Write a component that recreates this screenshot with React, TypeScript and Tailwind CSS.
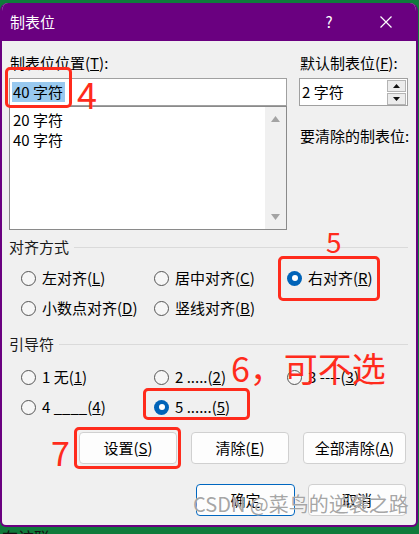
import React from 'react';

const font = "font-['Noto_Sans_CJK_SC','Noto_Sans',sans-serif]";

function Radio({ checked, children }: { checked?: boolean; children: React.ReactNode }) {
  return (
    <div className="flex h-[30px] items-center">
      {checked ? (
        <span className="flex h-[15px] w-[15px] items-center justify-center rounded-full bg-[#0063b8]">
          <span className="h-[6px] w-[6px] rounded-full bg-white" />
        </span>
      ) : (
        <span className="h-[15px] w-[15px] rounded-full border border-[#555] bg-[#f6f6f6]" />
      )}
      <span className="ml-[6px] whitespace-nowrap text-[15px] leading-[20px] text-black">{children}</span>
    </div>
  );
}

function GroupLabel({ text }: { text: string }) {
  return (
    <div className="flex h-[20px] items-center">
      <span className="text-[15px] leading-[20px] text-[#1a1a1a]">{text}</span>
      <span className="ml-[5px] h-px flex-1 bg-[#dadada]" />
    </div>
  );
}

function Btn({ w, primary, children }: { w: string; primary?: boolean; children: React.ReactNode }) {
  return (
    <div
      className={`flex h-[32px] ${w} items-center justify-center rounded-[4px] border bg-[#fdfdfd] text-[15px] text-black ${
        primary ? 'border-[#0067c0]' : 'border-[#d0d0d0]'
      }`}
    >
      {children}
    </div>
  );
}

export default function App() {
  return (
    <div className={`relative h-[534px] w-[419px] overflow-hidden bg-[#0f7b3b] pt-[3px] ${font}`}>
      <div className="flex h-[524px] w-[418px] flex-col overflow-hidden rounded-t-[8px] rounded-b-[6px] border-x-2 border-b-2 border-[#6a0080] bg-[#f0f0f0]">
        {/* title bar */}
        <div className="flex h-[38px] shrink-0 items-center bg-[#6a0080] pl-[8px] pr-[24px] text-white">
          <span className="text-[15px] leading-[20px]">制表位</span>
          <span className="ml-auto w-[16px] text-center text-[15px] leading-[20px]">?</span>
          <svg className="ml-[43px]" width="12" height="12" viewBox="0 0 12 12">
            <path d="M0.5 0.5 L11.5 11.5 M11.5 0.5 L0.5 11.5" stroke="white" strokeWidth="1.2" />
          </svg>
        </div>

        <div className="flex flex-col pl-[7px] pr-[8px]">
          {/* top area */}
          <div className="flex gap-[12px]">
            <div className="flex w-[278px] flex-col">
              <div className="mt-[12px] h-[20px] pl-px text-[15px] leading-[20px] text-black">
                制表位位置(<u>T</u>):
              </div>
              <div className="mt-[5px] flex h-[28px] items-center border border-[#a0a0a0] bg-white pl-[2px]">
                <span className="bg-[#99c9ef] pl-px pr-[2px] text-[15px] leading-[20px] text-black">40 字符</span>
              </div>
              <div className="flex h-[124px] border border-[#8a8a8a] bg-white">
                <div className="flex flex-1 flex-col pl-[3px] pt-[3px] text-[15px] leading-[20px] text-black">
                  <span>20 字符</span>
                  <span>40 字符</span>
                </div>
                <div className="flex w-[21px] flex-col items-center justify-between bg-[#f0f0f0] py-[9px]">
                  <svg width="9" height="6" viewBox="0 0 9 6">
                    <path d="M4.5 0 L9 6 L0 6 Z" fill="#a3a3a3" />
                  </svg>
                  <svg width="9" height="6" viewBox="0 0 9 6">
                    <path d="M0 0 L9 0 L4.5 6 Z" fill="#a3a3a3" />
                  </svg>
                </div>
              </div>
            </div>

            <div className="flex w-[109px] flex-col">
              <div className="mt-[12px] h-[20px] whitespace-nowrap pl-px text-[15px] leading-[20px] text-black">
                默认制表位(<u>F</u>):
              </div>
              <div className="mt-[5px] flex h-[28px] items-center border border-[#a0a0a0] bg-white pl-[2px] pr-px">
                <span className="flex-1 text-[15px] leading-[20px] text-black">2 字符</span>
                <div className="flex flex-col gap-px">
                  <div className="flex h-[12px] w-[19px] items-center justify-center border border-[#b4b4b4] bg-[#ececec]">
                    <svg width="7" height="4" viewBox="0 0 7 4">
                      <path d="M3.5 0 L7 4 L0 4 Z" fill="#111" />
                    </svg>
                  </div>
                  <div className="flex h-[12px] w-[19px] items-center justify-center border border-[#b4b4b4] bg-[#ececec]">
                    <svg width="7" height="4" viewBox="0 0 7 4">
                      <path d="M0 0 L7 0 L3.5 4 Z" fill="#111" />
                    </svg>
                  </div>
                </div>
              </div>
              <div className="mt-[20px] whitespace-nowrap pl-px text-[15px] leading-[20px] text-black">
                要清除的制表位:
              </div>
            </div>
          </div>

          {/* alignment */}
          <div className="mt-[7px]">
            <GroupLabel text="对齐方式" />
          </div>
          <div className="mt-[6px] grid grid-cols-[133px_133px_1fr] pl-[12px]">
            <Radio>
              左对齐(<u>L</u>)
            </Radio>
            <Radio>
              居中对齐(<u>C</u>)
            </Radio>
            <Radio checked>
              右对齐(<u>R</u>)
            </Radio>
            <Radio>
              小数点对齐(<u>D</u>)
            </Radio>
            <Radio>
              竖线对齐(<u>B</u>)
            </Radio>
          </div>

          {/* leader */}
          <div className="mt-[11px]">
            <GroupLabel text="引导符" />
          </div>
          <div className="mt-[8px] grid grid-cols-[133px_133px_1fr] pl-[12px]">
            <Radio>
              1 无(<u>1</u>)
            </Radio>
            <Radio>
              2 .....(<u>2</u>)
            </Radio>
            <Radio>
              3 ----(<u>3</u>)
            </Radio>
            <Radio>
              4 ____(<u>4</u>)
            </Radio>
            <Radio checked>
              5 ......(<u>5</u>)
            </Radio>
          </div>

          {/* buttons */}
          <div className="mr-[2px] mt-[10px] flex justify-end gap-[14px]">
            <Btn w="w-[98px]">
              设置(<u>S</u>)
            </Btn>
            <Btn w="w-[98px]">
              清除(<u>E</u>)
            </Btn>
            <Btn w="w-[103px]">
              全部清除(<u>A</u>)
            </Btn>
          </div>
          <div className="mr-[2px] mt-[20px] flex justify-end gap-[13px]">
            <Btn w="w-[99px]" primary>
              确定
            </Btn>
            <Btn w="w-[98px]">取消</Btn>
          </div>
        </div>
      </div>
      <div className="pl-[2px] text-[16px] leading-[20px] text-[#111]">在该联</div>

      {/* annotations */}
      <div className="absolute left-[5px] top-[67px] h-[41px] w-[67px] rounded-[5px] border-[3px] border-[#ff2b1c]" />
      <span className="absolute left-[77px] top-[75px] text-[36px] leading-none text-[#ff2b1c]">4</span>

      <span className="absolute left-[326px] top-[227px] text-[28px] leading-none text-[#ff2b1c]">5</span>
      <div className="absolute left-[278px] top-[256px] h-[45px] w-[102px] rounded-[5px] border-[3px] border-[#ff2b1c]" />

      <span className="absolute left-[231px] top-[351px] text-[34px] leading-none text-[#ff2b1c]">6，可不选</span>
      <div className="absolute left-[143px] top-[388px] h-[32px] w-[107px] rounded-[5px] border-[3px] border-[#ff2b1c]" />

      <span className="absolute left-[51px] top-[435px] text-[34px] leading-none text-[#ff2b1c]">7</span>
      <div className="absolute left-[74px] top-[427px] h-[42px] w-[107px] rounded-[5px] border-[3px] border-[#ff2b1c]" />

      <span className="absolute left-[193px] top-[494px] text-[20px] leading-none text-[#9a9a9a]/90 [text-shadow:0_0_1px_white]">
        CSDN @菜鸟的逆袭之路
      </span>
    </div>
  );
}
